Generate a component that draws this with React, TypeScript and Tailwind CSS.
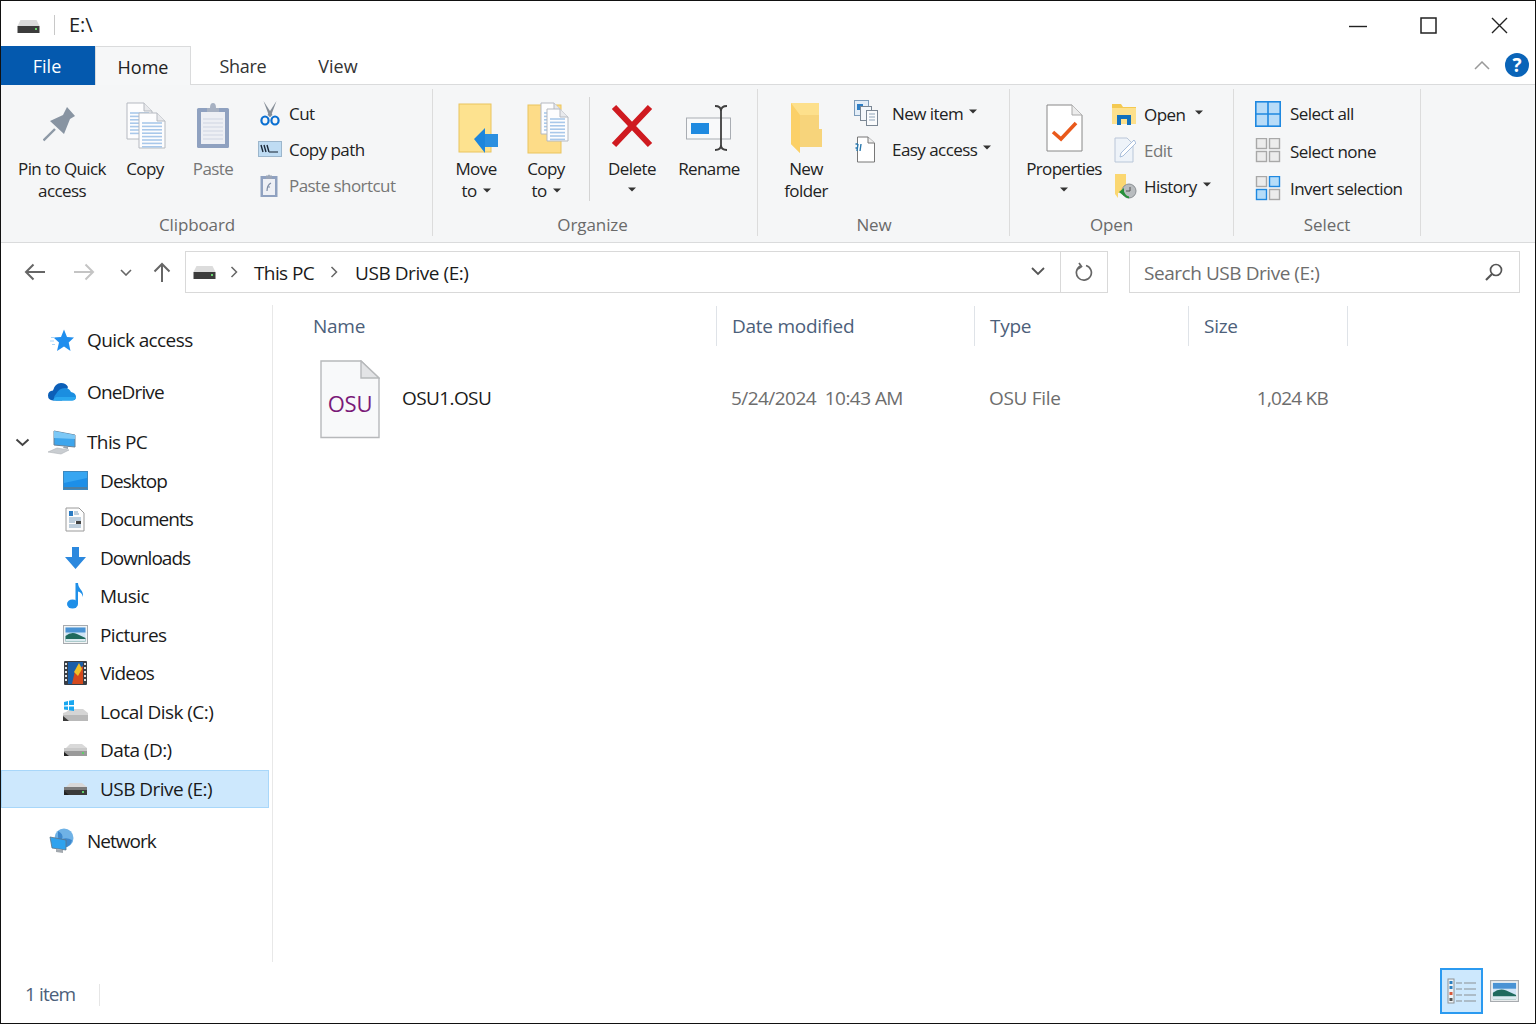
import React from "react";

type P = { className?: string };

const Caret = ({ className = "" }: P) => (
  <svg width="8" height="5" viewBox="0 0 8 5" className={`inline-block ${className}`}>
    <path d="M0 0.5H8L4 4.5Z" fill="#333" />
  </svg>
);

const Drive = ({ dark = false, w = 25 }: { dark?: boolean; w?: number }) => (
  <svg width={w} height={w * 0.56} viewBox="0 0 25 14">
    <path d="M3 5 L7 1 H19 L24 5 V6 H1 Z" fill="#d9d9d9" />
    <path d="M1 5 H24 V13 H1 Z" fill={dark ? "#7a7a7a" : "#c9c9c9"} />
    <path d="M1 8 H24 V13 H1 Z" fill={dark ? "#3a3a3a" : "#9a9a9a"} />
    <path d="M1 9 L6 13 H1 Z" fill="#222" />
    <rect x="19" y="9" width="2" height="2" fill="#5fd068" />
  </svg>
);

const TitleDrive = () => (
  <svg width="23" height="15" viewBox="0 0 23 15">
    <path d="M3.5 1 H19.5 L22.5 7 H0.5 Z" fill="#dcdcdc" />
    <path d="M0.5 7 H22.5 V14 H0.5 Z" fill="#3c3c3c" />
    <rect x="18" y="9" width="2" height="2" fill="#69d46f" />
  </svg>
);

const Pin = () => (
  <svg width="34" height="36" viewBox="0 0 34 36">
    <path d="M0.5 33.5 L12 22" stroke="#8d99a6" strokeWidth="2.4" />
    <path d="M24 0 L32 9 L27 12 L21 27 L7 14 L20 8 Z" fill="#8894a2" />
  </svg>
);

const Doc = ({ x, y, w, h, lines = 0 }: { x: number; y: number; w: number; h: number; lines?: number }) => (
  <g>
    <path
      d={`M${x} ${y} H${x + w - 8} L${x + w} ${y + 8} V${y + h} H${x} Z`}
      fill="#fdfdfe"
      stroke="#b5b9c0"
    />
    <path d={`M${x + w - 8} ${y} V${y + 8} H${x + w}`} fill="#e8e9ec" stroke="#b5b9c0" />
    {Array.from({ length: lines }).map((_, i) => (
      <path key={i} d={`M${x + 3} ${y + 10 + i * 3.4} H${x + w - 3}`} stroke="#a9c8ea" strokeWidth="1.6" />
    ))}
  </g>
);

const CopyIco = () => (
  <svg width="40" height="48" viewBox="0 0 40 48">
    <Doc x={1} y={2} w={25} h={36} lines={7} />
    <Doc x={13} y={12} w={26} h={35} lines={9} />
  </svg>
);

const PasteIco = () => (
  <svg width="34" height="47" viewBox="0 0 34 47">
    <rect x="1" y="6" width="32" height="40" rx="1.5" fill="#8fa1c0" />
    <rect x="5" y="10" width="24" height="32" fill="#edeff4" />
    {[0, 1, 2, 3, 4, 5].map((i) => (
      <path key={i} d={`M7 ${17 + i * 4}H27`} stroke="#d4d9e4" strokeWidth="1.2" />
    ))}
    <path d="M11 10 V6 H14 Q14 1 17 1 Q20 1 20 6 H23 V10 Z" fill="#a7b1c2" />
  </svg>
);

const Scissors = () => (
  <svg width="20" height="26" viewBox="0 0 20 26">
    <path d="M3.5 1 L12.5 15 L9.5 17 Z" fill="#858d97" />
    <path d="M16.5 1 L7.5 15 L10.5 17 Z" fill="#858d97" />
    <ellipse cx="5" cy="20.5" rx="3.6" ry="4" fill="none" stroke="#0a6fd1" strokeWidth="2.2" />
    <ellipse cx="15" cy="20.5" rx="3.6" ry="4" fill="none" stroke="#0a6fd1" strokeWidth="2.2" />
  </svg>
);

const CopyPath = () => (
  <svg width="24" height="16" viewBox="0 0 24 16">
    <rect x="0.5" y="0.5" width="23" height="15" fill="#bfdcf3" stroke="#9cb6cc" />
    <path d="M3 4 L5 11 M6 4 L8 11 M9 4 L11 11" stroke="#1c2a3a" strokeWidth="1.4" />
    <path d="M11 11 H20" stroke="#4d5f70" strokeWidth="1.5" />
  </svg>
);

const PasteShortcut = () => (
  <svg width="18" height="25" viewBox="0 0 18 25">
    <rect x="0.5" y="3" width="17" height="21" fill="#8fa1c0" />
    <rect x="3" y="6" width="12" height="16" fill="#eef0f5" />
    <path d="M6 6 V2.5 H8 Q9 0.5 10 2.5 H12 V6 Z" fill="#9aa5b8" />
    <path d="M7 18 Q7 12 11 10 M7 14 H10" stroke="#7d8ba3" strokeWidth="1.2" fill="none" />
  </svg>
);

const MoveIco = () => (
  <svg width="41" height="51" viewBox="0 0 41 51">
    <rect x="1" y="1" width="32" height="48" fill="#fde28f" stroke="#eac45f" />
    <path d="M16 36 L27 25 V31 H40 V44 H27 V50 Z" fill="#1d86dc" />
    <path d="M27 31 H40 V44 H27 Z" fill="#2b8fe0" />
  </svg>
);

const CopyToIco = () => (
  <svg width="42" height="52" viewBox="0 0 42 52">
    <rect x="1" y="3" width="33" height="48" fill="#fddc88" stroke="#eac45f" />
    <Doc x={14} y={1} w={21} h={31} lines={6} />
    <Doc x={20} y={7} w={21} h={32} lines={7} />
  </svg>
);

const DeleteIco = () => (
  <svg width="42" height="44" viewBox="0 0 42 44">
    <path d="M3 3 L39 41 M39 3 L3 41" stroke="#cf1a20" strokeWidth="6" />
  </svg>
);

const RenameIco = () => (
  <svg width="46" height="46" viewBox="0 0 46 46">
    <rect x="0.5" y="13" width="44" height="21" fill="#f8f9fa" stroke="#a9adb3" />
    <rect x="5" y="18" width="18" height="11" fill="#1f8ae0" />
    <path d="M29 1 Q35 1 35 6 V40 Q35 45 41 45 M41 1 Q35 1 35 6 M35 40 Q35 45 29 45" stroke="#3f3f3f" strokeWidth="1.8" fill="none" />
  </svg>
);

const NewFolderIco = () => (
  <svg width="33" height="52" viewBox="0 0 33 52">
    <path d="M1 1 H29 V27 H32 V45 H10 V51 L1 42 Z" fill="#fde08c" />
    <path d="M1 1 L10 13 V51 L1 42 Z" fill="#fbd068" />
    <path d="M10 13 H29 V27 H32 V45 H10 Z" fill="#f7d47b" />
  </svg>
);

const NewItemIco = () => (
  <svg width="25" height="27" viewBox="0 0 25 27">
    <rect x="0.5" y="0.5" width="14" height="15" fill="#e4eef8" stroke="#7d9cba" />
    <rect x="3" y="4" width="6" height="6" fill="#2f7fc5" />
    <rect x="6.5" y="6.5" width="11" height="14" fill="#f4f7fa" stroke="#7b8794" />
    <rect x="12.5" y="10.5" width="11" height="15" fill="#fafbfc" stroke="#7b8794" />
    <path d="M15 14H21M15 17H21M15 20H21" stroke="#8fa5ba" />
  </svg>
);

const EasyIco = () => (
  <svg width="20" height="27" viewBox="0 0 20 27">
    <path d="M2.5 1 H13 L19.5 7 V26 H2.5 Z" fill="#fff" stroke="#777" />
    <path d="M13 1 V7 H19.5" fill="#eee" stroke="#777" />
    <path d="M3 8 H0.5 M3 12 H0.5 M3 8 L2 15 M6 8 L5 15" stroke="#2a78ad" strokeWidth="1.4" />
  </svg>
);

const PropsIco = () => (
  <svg width="37" height="48" viewBox="0 0 37 48">
    <path d="M1 1 H26 L36 11 V47 H1 Z" fill="#fff" stroke="#888" />
    <path d="M26 1 V11 H36" fill="#ececec" stroke="#aaa" />
    <path d="M7 28 L15 35 L30 19" stroke="#e9591b" strokeWidth="3.6" fill="none" />
  </svg>
);

const OpenIco = () => (
  <svg width="24" height="23" viewBox="0 0 24 23">
    <path d="M0 1 H9 L11 4 H24 V21 H0 Z" fill="#f4c951" />
    <path d="M0 5 H24 V21 H0 Z" fill="#fde08c" />
    <path d="M5 22 V12 H19 V22 H15 V16 H9 V22 Z" fill="#1270bd" />
  </svg>
);

const EditIco = () => (
  <svg width="22" height="26" viewBox="0 0 22 26">
    <path d="M1 1 H13 L19 7 V25 H1 Z" fill="#eef3f9" stroke="#b9c6d8" />
    <path d="M6 20 L7 16 L20 3 L22 6 L9 19 Z" fill="#fff" stroke="#a8bedb" />
  </svg>
);

const HistoryIco = () => (
  <svg width="23" height="26" viewBox="0 0 23 26">
    <path d="M1 1 H12 V20 H4 V25 L1 21 Z" fill="#fbd771" />
    <circle cx="15" cy="18" r="7" fill="#b8bcbf" stroke="#8a8f93" />
    <path d="M12 18 H16 V14" stroke="#555" fill="none" />
    <path d="M5 19 L10 15 V23 Z" fill="#27903b" />
    <path d="M9 19 Q12 25 15 24" stroke="#27903b" strokeWidth="2" fill="none" />
  </svg>
);

const Grid = ({ on }: { on: boolean[] }) => {
  const size = 10;
  const cells = [
    [2, 1],
    [15, 1],
    [2, 14],
    [15, 14],
  ];
  return (
    <svg width="26" height="26" viewBox="0 0 26 26">
      {cells.map(([x, y], i) => (
        <rect
          key={i}
          x={x - 0.5}
          y={y - 0.5}
          width={size}
          height={size}
          fill={on[i] ? "#b5dcf8" : "#ececec"}
          stroke={on[i] ? "#1e88e0" : "#a8a8a8"}
          strokeWidth="1.4"
        />
      ))}
    </svg>
  );
};

const SelectAllIco = () => (
  <svg width="26" height="26" viewBox="0 0 26 26">
    <rect x="0.8" y="0.8" width="24.4" height="24.4" fill="#b8dcf8" stroke="#1e88e0" strokeWidth="1.6" />
    <path d="M13 1V25M1 13H25" stroke="#1e88e0" strokeWidth="1.6" />
  </svg>
);

const Star = () => (
  <svg width="24" height="23" viewBox="0 0 24 23">
    <path d="M14 0.5 L17 8 L24 8.5 L18.7 13.5 L20.5 22 L14 17.5 L7 22 L9 13.5 L3.5 8.5 L11 8 Z" fill="#1f8eee" />
    <path d="M1 8.5H5M0 12H4M2 15.5H5" stroke="#a7d4f8" strokeWidth="1" />
  </svg>
);

const Cloud = () => (
  <svg width="28" height="19" viewBox="0 0 28 19">
    <path d="M5 18.5 Q0 18 0 13.5 Q0 9 5 8.5 Q7 1 13 1 Q18 1 20 5 L14 18.5 Z" fill="#0c5fb8" />
    <path d="M8 18.5 Q4 16 8 12 Q11 6 17 6 Q21 6 23 10 Q28 11 28 15 Q28 18.5 24 18.5 Z" fill="#1b8ee0" />
    <path d="M5 18.5 H24 Q27 18.5 28 15 H9 Q6 15 5 18.5 Z" fill="#2aa7ef" />
  </svg>
);

const PC = () => (
  <svg width="28" height="25" viewBox="0 0 28 25">
    <path d="M6 1 L27 5 V17 L6 15 Z" fill="#3da5ec" stroke="#6b8094" />
    <path d="M6 1 L27 5 V9 L6 8 Z" fill="#7cc8f6" />
    <path d="M16 16 L15 18 L20 19 V17 Z" fill="#9aa4ad" />
    <path d="M0 22 L9 18 L21 20 L13 24 Z" fill="#c9cdd1" stroke="#aeb3b8" strokeWidth="0.6" />
  </svg>
);

const DesktopIco = () => (
  <svg width="25" height="19" viewBox="0 0 25 19">
    <rect x="0.5" y="0.5" width="24" height="18" fill="#1d8fe8" stroke="#3c88bf" />
    <path d="M1 1H24V7L1 12Z" fill="#37a6f1" />
    <rect x="1" y="16" width="23" height="2" fill="#4d7fa3" />
  </svg>
);

const DocumentsIco = () => (
  <svg width="20" height="25" viewBox="0 0 20 25">
    <path d="M1 1 H14 L19 6 V24 H1 Z" fill="#fdfdfd" stroke="#9a9a9a" />
    <path d="M4 4H8V9H4Z" fill="#2a7bc3" />
    <path d="M9 5H13M9 7H14M4 11H16M4 13H16M4 15H10M4 18H16M4 20H16" stroke="#7fa0bd" strokeWidth="1" />
    <rect x="11" y="14" width="5" height="3" fill="#444" />
  </svg>
);

const DownloadIco = () => (
  <svg width="21" height="22" viewBox="0 0 21 22">
    <path d="M7 0 H14 V10 H21 L10.5 22 L0 10 H7 Z" fill="#2b88de" />
  </svg>
);

const MusicIco = () => (
  <svg width="17" height="26" viewBox="0 0 17 26">
    <ellipse cx="5.5" cy="21" rx="5.5" ry="4.6" fill="#1f8fe8" />
    <path d="M8.5 0 H11 C11 6 17 7 16 14 C15 10 13 9 11 8.5 V21 H8.5 Z" fill="#1f8fe8" />
  </svg>
);

const PicturesIco = ({ w = 25 }: { w?: number }) => (
  <svg width={w} height={(w * 19) / 25} viewBox="0 0 25 19">
    <rect x="0.5" y="0.5" width="24" height="18" fill="#f2f4f5" stroke="#a7abaf" />
    <rect x="2.5" y="2.5" width="20" height="14" fill="#cfe4f5" />
    <rect x="2.5" y="2.5" width="20" height="5" fill="#4a93d4" />
    <path d="M2.5 11 Q8 6.5 14 9 L22.5 13 V16.5 H2.5 Z" fill="#1f6a5d" />
    <path d="M2.5 14 H22.5 V16.5 H2.5 Z" fill="#dbeaf0" />
  </svg>
);

const VideosIco = () => (
  <svg width="23" height="24" viewBox="0 0 23 24">
    <rect width="23" height="24" rx="1" fill="#3a3e44" />
    <rect x="4" y="1" width="15" height="22" fill="#1a5ea8" />
    <path d="M8 23 L11 10 L19 5 V23 Z" fill="#d44a1e" />
    <path d="M10 11 L15 2 L18 8 L14 15 Z" fill="#f0c028" />
    {[2, 6, 10, 14, 18].map((y) => (
      <g key={y}>
        <rect x="1" y={y} width="2" height="2" fill="#dfe3e6" />
        <rect x="20" y={y} width="2" height="2" fill="#dfe3e6" />
      </g>
    ))}
  </svg>
);

const LocalDisk = () => (
  <svg width="25" height="23" viewBox="0 0 25 23">
    <path d="M3 12 L7 9 H20 L25 13 V15 H0 V13 Z" fill="#d5d5d5" />
    <path d="M0 15 H25 V21 H0 Z" fill="#b9b9b9" />
    <path d="M0 16 L6 21 H0 Z" fill="#3a3a3a" />
    <path d="M1 2 L5 1 V5 L1 5.5Z M6 0.8 L11 0 V5 L6 5Z M1 6.5 L5 6.5 V10 L1 9.5Z M6 6.5 H11 V11 L6 10.3Z" fill="#19a7f0" />
  </svg>
);

const NetworkIco = () => (
  <svg width="26" height="26" viewBox="0 0 26 26">
    <circle cx="15" cy="10" r="9.5" fill="#6fb2e6" />
    <path d="M9 3 Q15 6 13 11 Q18 9 23 12 Q22 19 15 19.5 Q8 16 9 3Z" fill="#3d88cd" />
    <path d="M1 9 L17 12 V22 L3 20 Z" fill="#2fa2ee" stroke="#5d7486" strokeWidth="0.8" />
    <path d="M7 21 L14 22 V25 L7 24 Z" fill="#a3a9af" />
  </svg>
);

const OsuFile = () => (
  <div className="relative w-[60px] h-[79px] shrink-0">
    <svg width="60" height="79" viewBox="0 0 60 79" className="absolute inset-0">
      <path d="M1 1 H41 L59 18 V77.5 H1 Z" fill="#f8f9fa" stroke="#b7b9bb" strokeWidth="1.4" />
      <path d="M41 1 V18 H59 Z" fill="#e3e4e6" stroke="#b7b9bb" strokeWidth="1.4" />
    </svg>
    <span className="absolute left-0 right-0 top-[31px] text-center text-[22px] leading-[24px] text-[#7a1a78] tracking-[-0.2px]">OSU</span>
  </div>
);

const LargeBtn = ({
  icon,
  lines,
  w,
  disabled,
  caretLine,
  iconClass = "pt-[8px]",
}: {
  icon: React.ReactNode;
  lines: string[];
  w: string;
  disabled?: boolean;
  caretLine?: boolean;
  iconClass?: string;
}) => (
  <div className={`${w} shrink-0 flex flex-col items-center`}>
    <div className={`h-[69px] flex items-center justify-center ${iconClass}`}>{icon}</div>
    <div className={`text-center text-[17px] leading-[22px] tracking-[-0.6px] whitespace-nowrap ${disabled ? "text-[#767676]" : "text-[#222]"}`}>
      {lines.map((l, i) => (
        <div key={i}>
          {l}
          {caretLine && i === lines.length - 1 && <Caret className="ml-[6px] mb-[3px]" />}
        </div>
      ))}
    </div>
  </div>
);

const SmallBtn = ({
  icon,
  label,
  iconW,
  h = "h-[36px]",
  disabled,
  caret,
  caretClass = "ml-[6px]",
  textClass = "mt-[2px]",
}: {
  icon: React.ReactNode;
  label: string;
  iconW: string;
  h?: string;
  disabled?: boolean;
  caret?: boolean;
  caretClass?: string;
  textClass?: string;
}) => (
  <div className={`flex items-center ${h} whitespace-nowrap`}>
    <div className={`${iconW} shrink-0 flex items-center`}>{icon}</div>
    <span className={`text-[17px] tracking-[-0.55px] ${textClass} ${disabled ? "text-[#767676]" : "text-[#222]"}`}>{label}</span>
    {caret && <Caret className={`${caretClass} mb-[4px]`} />}
  </div>
);

const Group = ({
  w,
  label,
  labelClass,
  children,
}: {
  w: string;
  label: string;
  labelClass: string;
  children: React.ReactNode;
}) => (
  <div className={`${w} shrink-0 h-[147px] flex flex-col border-r border-[#dcdcdc]`}>
    <div className="h-[124px] flex">{children}</div>
    <div className={`h-[23px] text-center text-[17px] leading-[24px] tracking-[-0.1px] text-[#6a6a6a] ${labelClass}`}>{label}</div>
  </div>
);

const Item = ({
  icon,
  label,
  selected,
  track = "tracking-[-0.55px]",
}: {
  icon: React.ReactNode;
  label: string;
  selected?: boolean;
  track?: string;
}) => (
  <div
    className={`h-[38.5px] flex items-center pl-[56px] mr-[3px] border ${
      selected ? "bg-[#cde8fd] border-[#a8d7fa]" : "border-transparent"
    }`}
  >
    <div className="w-[34px] mr-[8px] flex justify-center shrink-0">{icon}</div>
    <span className={`text-[19px] ${track} text-[#1a1a1a] whitespace-nowrap`}>{label}</span>
  </div>
);

const Top = ({
  icon,
  label,
  className = "",
  chevron,
  track = "tracking-[-0.6px]",
}: {
  icon: React.ReactNode;
  label: string;
  className?: string;
  chevron?: boolean;
  track?: string;
}) => (
  <div className={`h-[38.5px] flex items-center ${className}`}>
    <div className="w-[44px] pl-[14px] shrink-0">
      {chevron && (
        <svg width="15" height="9" viewBox="0 0 15 9">
          <path d="M1.5 1.5 L7.5 7 L13.5 1.5" stroke="#444" strokeWidth="2" fill="none" />
        </svg>
      )}
    </div>
    <div className="w-[33px] mr-[9px] flex justify-center shrink-0">{icon}</div>
    <span className={`text-[19px] ${track} text-[#1a1a1a] whitespace-nowrap`}>{label}</span>
  </div>
);

const Head = ({ label, w }: { label: string; w: string }) => (
  <div className={`${w} shrink-0 h-[40px] flex items-center pl-[15px] border-r border-[#dfe3e8] text-[19px] tracking-[-0.25px] text-[#4c607a] whitespace-nowrap`}>
    {label}
  </div>
);

export default function App() {
  return (
    <div className="w-[1536px] h-[1024px] flex flex-col bg-white border border-[#111] overflow-hidden font-['Open_Sans','Noto_Sans',sans-serif]">
      {/* Title bar */}
      <div className="h-[45px] flex items-center shrink-0">
        <div className="pl-[16px] pt-[5px]">
          <TitleDrive />
        </div>
        <div className="ml-[14px] mt-[2px] w-px h-[20px] bg-[#c8c8c8]" />
        <span className="ml-[14px] mt-[3px] text-[20px] text-[#222]">E:\</span>
        <div className="ml-auto flex items-center mt-[3px]">
          <svg width="18" height="3" viewBox="0 0 18 3" className="mr-[53px] mt-[3px]">
            <path d="M0 1.5H18" stroke="#222" strokeWidth="1.4" />
          </svg>
          <svg width="17" height="17" viewBox="0 0 17 17" className="mr-[54px]">
            <rect x="1" y="1" width="15" height="15" fill="none" stroke="#222" strokeWidth="1.5" />
          </svg>
          <svg width="17" height="17" viewBox="0 0 17 17" className="mr-[27px]">
            <path d="M1 1 L16 16 M16 1 L1 16" stroke="#222" strokeWidth="1.4" />
          </svg>
        </div>
      </div>

      {/* Tabs */}
      <div className="h-[39px] flex shrink-0 border-b border-[#dadbdc] relative">
        <div className="w-[94px] h-[39px] bg-[#0459ae] text-white flex items-center justify-center text-[18px] pr-[2px] pt-[2px]">File</div>
        <div className="w-[96px] h-[39px] bg-[#f6f7f8] border-x border-t border-[#dadbdc] flex items-center justify-center text-[18px] text-[#222] pt-[2px] z-10">Home</div>
        <div className="w-[104px] flex items-center justify-center text-[18px] tracking-[-0.3px] text-[#333] pt-[2px]">Share</div>
        <div className="w-[86px] flex items-center justify-center text-[18px] text-[#333] pt-[2px]">View</div>
        <div className="ml-auto flex items-center pr-[6px]">
          <svg width="16" height="9" viewBox="0 0 16 9" className="mr-[15px]">
            <path d="M1 8 L8 1 L15 8" stroke="#9a9a9a" strokeWidth="1.5" fill="none" />
          </svg>
          <div className="w-[24px] h-[24px] rounded-full bg-[#0a64b8] text-white flex items-center justify-center text-[19px] font-bold">?</div>
        </div>
      </div>

      {/* Ribbon */}
      <div className="h-[158px] shrink-0 bg-[#f5f6f7] border-b border-[#dadbdc] pt-[4px] flex">
        <Group w="w-[432px]" label="Clipboard" labelClass="pr-[39px]">
          <div className="w-[16px] shrink-0" />
          <LargeBtn w="w-[90px]" iconClass="pt-[3px] pr-[4px]" icon={<Pin />} lines={["Pin to Quick", "access"]} />
          <LargeBtn w="w-[76px]" iconClass="pt-[3px] pl-[1px]" icon={<CopyIco />} lines={["Copy"]} />
          <LargeBtn w="w-[60px]" iconClass="pt-[3px]" icon={<PasteIco />} lines={["Paste"]} disabled />
          <div className="ml-[15px] pt-[6px] flex flex-col">
            <SmallBtn iconW="w-[31px] pl-[2px]" icon={<Scissors />} label="Cut" />
            <SmallBtn iconW="w-[31px]" icon={<CopyPath />} label="Copy path" />
            <SmallBtn iconW="w-[31px] pl-[2px]" icon={<PasteShortcut />} label="Paste shortcut" disabled />
          </div>
        </Group>
        <Group w="w-[325px]" label="Organize" labelClass="pr-[5px]">
          <div className="w-[8px] shrink-0" />
          <LargeBtn w="w-[70px]" iconClass="pt-[9px] pl-[4px]" icon={<MoveIco />} lines={["Move", "to"]} caretLine />
          <LargeBtn w="w-[70px]" iconClass="pt-[8px] pl-[4px]" icon={<CopyToIco />} lines={["Copy", "to"]} caretLine />
          <div className="ml-[8px] mt-[8px] w-px h-[104px] bg-[#d4d4d4] shrink-0" />
          <div className="w-[84px] shrink-0 flex flex-col items-center">
            <div className="h-[69px] flex items-center justify-center pt-[5px]">
              <DeleteIco />
            </div>
            <div className="text-center text-[17px] leading-[22px] tracking-[-0.55px] text-[#222]">Delete</div>
            <Caret className="mt-[7px]" />
          </div>
          <LargeBtn w="w-[70px]" iconClass="pt-[9px]" icon={<RenameIco />} lines={["Rename"]} />
        </Group>
        <Group w="w-[252px]" label="New" labelClass="pr-[19px]">
          <LargeBtn w="w-[96px]" iconClass="pt-[9px]" icon={<NewFolderIco />} lines={["New", "folder"]} />
          <div className="pt-[6px] flex flex-col">
            <SmallBtn iconW="w-[38px]" icon={<NewItemIco />} label="New item" caret />
            <SmallBtn iconW="w-[38px] pl-[1px]" icon={<EasyIco />} label="Easy access" caret />
          </div>
        </Group>
        <Group w="w-[224px]" label="Open" labelClass="pr-[20px]">
          <div className="w-[9px] shrink-0" />
          <div className="w-[90px] shrink-0 flex flex-col items-center">
            <div className="h-[69px] flex items-center justify-center pt-[9px]">
              <PropsIco />
            </div>
            <div className="text-[17px] leading-[22px] tracking-[-0.7px] text-[#222]">Properties</div>
            <Caret className="mt-[7px]" />
          </div>
          <div className="ml-[3px] pt-[7px] flex flex-col">
            <SmallBtn iconW="w-[32px]" icon={<OpenIco />} label="Open" caret caretClass="ml-[10px]" />
            <SmallBtn iconW="w-[32px] pl-[2px]" icon={<EditIco />} label="Edit" disabled />
            <SmallBtn iconW="w-[32px] pl-[2px]" icon={<HistoryIco />} label="History" caret />
          </div>
        </Group>
        <Group w="w-[187px]" label="Select" labelClass="">
          <div className="pl-[21px] pt-[6px] flex flex-col">
            <SmallBtn iconW="w-[35px]" h="h-[37.5px]" textClass="" icon={<SelectAllIco />} label="Select all" />
            <SmallBtn iconW="w-[35px]" h="h-[37.5px]" textClass="" icon={<Grid on={[false, false, false, false]} />} label="Select none" />
            <SmallBtn iconW="w-[35px]" h="h-[37.5px]" textClass="" icon={<Grid on={[false, true, true, false]} />} label="Invert selection" />
          </div>
        </Group>
      </div>

      {/* Address bar */}
      <div className="h-[62px] shrink-0 flex items-center pb-[5px]">
        <svg width="22" height="18" viewBox="0 0 22 18" className="ml-[23px]">
          <path d="M21 9 H2 M9.5 1.5 L2 9 L9.5 16.5" stroke="#666" strokeWidth="2" fill="none" />
        </svg>
        <svg width="22" height="18" viewBox="0 0 22 18" className="ml-[27px]">
          <path d="M1 9 H20 M12.5 1.5 L20 9 L12.5 16.5" stroke="#c4c4c4" strokeWidth="2" fill="none" />
        </svg>
        <svg width="12" height="7" viewBox="0 0 12 7" className="ml-[25px] mt-[1px]">
          <path d="M1 1 L6 6 L11 1" stroke="#666" strokeWidth="1.6" fill="none" />
        </svg>
        <svg width="18" height="20" viewBox="0 0 18 20" className="ml-[21px]">
          <path d="M9 20 V2 M1.5 9.5 L9 2 L16.5 9.5" stroke="#666" strokeWidth="2" fill="none" />
        </svg>
        <div className="ml-[14px] w-[923px] h-[42px] border border-[#d9d9d9] flex items-center">
          <div className="ml-[7px] mt-[2px]">
            <TitleDrive />
          </div>
          <svg width="8" height="12" viewBox="0 0 8 12" className="ml-[14px]">
            <path d="M1.5 1 L6.5 6 L1.5 11" stroke="#666" strokeWidth="1.5" fill="none" />
          </svg>
          <span className="ml-[16px] mt-[4px] text-[19px] tracking-[-0.6px] text-[#1a1a1a]">This PC</span>
          <svg width="8" height="12" viewBox="0 0 8 12" className="ml-[16px]">
            <path d="M1.5 1 L6.5 6 L1.5 11" stroke="#666" strokeWidth="1.5" fill="none" />
          </svg>
          <span className="ml-[17px] mt-[4px] text-[19px] tracking-[-0.45px] text-[#1a1a1a]">USB Drive (E:)</span>
          <div className="ml-auto h-full flex items-center border-r-0">
            <svg width="14" height="9" viewBox="0 0 14 9" className="mr-[15px]">
              <path d="M1 1 L7 7 L13 1" stroke="#555" strokeWidth="1.8" fill="none" />
            </svg>
            <div className="w-[47px] h-full border-l border-[#d9d9d9] flex items-center justify-center">
              <svg width="18" height="20" viewBox="0 0 18 20">
                <path d="M11 3.5 A7.5 7.5 0 1 1 5.5 4" stroke="#666" strokeWidth="1.7" fill="none" />
                <path d="M4 1 L6.5 4.5 L3 7" stroke="#666" strokeWidth="1.7" fill="none" />
              </svg>
            </div>
          </div>
        </div>
        <div className="ml-[21px] w-[391px] h-[42px] border border-[#d9d9d9] flex items-center pl-[14px] pr-[15px]">
          <span className="mt-[4px] text-[19px] tracking-[-0.45px] text-[#6d6d6d]">Search USB Drive (E:)</span>
          <svg width="20" height="20" viewBox="0 0 20 20" className="ml-auto">
            <circle cx="12" cy="8" r="5.5" stroke="#555" strokeWidth="1.7" fill="none" />
            <path d="M8 12 L2 18" stroke="#555" strokeWidth="2.2" />
          </svg>
        </div>
      </div>

      {/* Body */}
      <div className="h-[657px] shrink-0 flex">
        <div className="w-[272px] shrink-0 border-r border-[#e8e8e8] pt-[16px]">
          <Top icon={<Star />} label="Quick access" />
          <Top icon={<Cloud />} label="OneDrive" className="mt-[13px]" track="tracking-[-0.85px]" />
          <Top icon={<PC />} label="This PC" className="mt-[12px]" chevron />
          <Item icon={<DesktopIco />} label="Desktop" track="tracking-[-0.9px]" />
          <Item icon={<DocumentsIco />} label="Documents" track="tracking-[-1px]" />
          <Item icon={<DownloadIco />} label="Downloads" track="tracking-[-1px]" />
          <Item icon={<MusicIco />} label="Music" />
          <Item icon={<PicturesIco />} label="Pictures" track="tracking-[-0.6px]" />
          <Item icon={<VideosIco />} label="Videos" track="tracking-[-0.8px]" />
          <Item icon={<LocalDisk />} label="Local Disk (C:)" />
          <Item icon={<Drive />} label="Data (D:)" />
          <Item icon={<Drive dark />} label="USB Drive (E:)" selected />
          <Top icon={<NetworkIco />} label="Network" className="mt-[13.5px]" track="tracking-[-1px]" />
        </div>
        <div className="flex-1 min-w-0">
          <div className="flex pl-[25px] pt-[1px]">
            <Head label="Name" w="w-[419px]" />
            <Head label="Date modified" w="w-[258px]" />
            <Head label="Type" w="w-[214px]" />
            <Head label="Size" w="w-[159px]" />
          </div>
          <div className="flex items-center mt-[14px] pl-[47px] h-[79px]">
            <OsuFile />
            <span className="ml-[22px] w-[329px] shrink-0 text-[19px] tracking-[-0.6px] text-[#1a1a1a] mb-[2px]">OSU1.OSU</span>
            <span className="w-[258px] shrink-0 text-[19px] tracking-[-0.55px] text-[#6d6d6d] whitespace-pre mb-[2px]">5/24/2024  10:43 AM</span>
            <span className="w-[180px] shrink-0 text-[19px] tracking-[-0.3px] text-[#6d6d6d] mb-[2px]">OSU File</span>
            <span className="w-[159px] shrink-0 text-right text-[19px] tracking-[-0.75px] text-[#6d6d6d] mb-[2px]">1,024 KB</span>
          </div>
        </div>
      </div>

      {/* Status */}
      <div className="flex-1 flex items-center pl-[24px] pr-[16px]">
        <span className="text-[19px] tracking-[-0.9px] text-[#4c607a] mt-[4px]">1 item</span>
        <div className="ml-[24px] mt-[4px] w-px h-[22px] bg-[#e6e6e6]" />
        <div className="ml-auto flex items-center mb-[3px]">
          <div className="w-[43px] h-[46px] bg-[#cde8fd] border-2 border-[#2b9af0] flex items-center justify-center">
            <svg width="30" height="26" viewBox="0 0 30 26">
              <rect x="1" y="1" width="6" height="24" fill="#eef3f7" stroke="#8e9296" />
              <rect x="2.5" y="3" width="3" height="3" fill="#2b7fc0" />
              <rect x="2.5" y="8" width="3" height="3" fill="#2b7fc0" />
              <rect x="2.5" y="14" width="3" height="3" fill="#d8583a" />
              <rect x="2.5" y="20" width="3" height="3" fill="#555" />
              <path d="M9 5H15M17 5H29M9 11H15M17 11H29M9 17H15M17 17H29M9 23H15M17 23H29" stroke="#8b8f93" strokeWidth="1.2" />
            </svg>
          </div>
          <div className="ml-[7px]">
            <PicturesIco w={29} />
          </div>
        </div>
      </div>
    </div>
  );
}
